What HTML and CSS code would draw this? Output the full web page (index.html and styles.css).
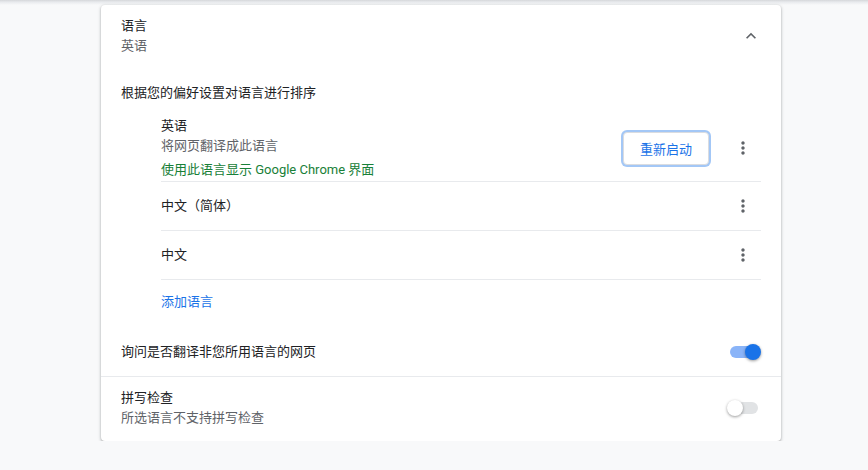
FILE: index.html
```html
<!DOCTYPE html>
<html lang="zh-CN">
  <head>
    <meta charset="UTF-8" />
    <meta name="viewport" content="width=device-width, initial-scale=1.0" />
    <title>设置 - 语言</title>
    <link rel="stylesheet" href="styles.css">
  </head>
  <body>
    <div class="toolbar-shade"></div>

    <div class="card">
      <div class="section-head">
        <div>
          <div class="title">语言</div>
          <div class="sub">英语</div>
        </div>
        <svg class="chevron" viewBox="0 0 24 24" width="20" height="20">
          <path d="M12 8l-6 6 1.41 1.41L12 10.83l4.59 4.58L18 14z" fill="#5f6368"/>
        </svg>
      </div>

      <div class="hint">根据您的偏好设置对语言进行排序</div>

      <div class="lang-list">
        <div class="lang-row first">
          <div class="lang-info">
            <div class="title">英语</div>
            <div class="sub">将网页翻译成此语言</div>
            <div class="ui-lang">使用此语言显示 Google Chrome 界面</div>
          </div>
          <button class="restart-btn">重新启动</button>
          <span class="more">
            <svg viewBox="0 0 24 24" width="20" height="20"><path d="M12 8c1.1 0 2-.9 2-2s-.9-2-2-2-2 .9-2 2 .9 2 2 2zm0 2c-1.1 0-2 .9-2 2s.9 2 2 2 2-.9 2-2-.9-2-2-2zm0 6c-1.1 0-2 .9-2 2s.9 2 2 2 2-.9 2-2-.9-2-2-2z" fill="#5f6368"/></svg>
          </span>
        </div>
        <div class="lang-row">
          <div class="lang-info"><div class="title">中文（简体）</div></div>
          <span class="more">
            <svg viewBox="0 0 24 24" width="20" height="20"><path d="M12 8c1.1 0 2-.9 2-2s-.9-2-2-2-2 .9-2 2 .9 2 2 2zm0 2c-1.1 0-2 .9-2 2s.9 2 2 2 2-.9 2-2-.9-2-2-2zm0 6c-1.1 0-2 .9-2 2s.9 2 2 2 2-.9 2-2-.9-2-2-2z" fill="#5f6368"/></svg>
          </span>
        </div>
        <div class="lang-row">
          <div class="lang-info"><div class="title">中文</div></div>
          <span class="more">
            <svg viewBox="0 0 24 24" width="20" height="20"><path d="M12 8c1.1 0 2-.9 2-2s-.9-2-2-2-2 .9-2 2 .9 2 2 2zm0 2c-1.1 0-2 .9-2 2s.9 2 2 2 2-.9 2-2-.9-2-2-2zm0 6c-1.1 0-2 .9-2 2s.9 2 2 2 2-.9 2-2-.9-2-2-2z" fill="#5f6368"/></svg>
          </span>
        </div>
        <div class="add-lang">添加语言</div>
      </div>

      <div class="setting-row">
        <div class="title">询问是否翻译非您所用语言的网页</div>
        <span class="toggle on"><span class="track"></span><span class="knob"></span></span>
      </div>

      <div class="setting-row spell">
        <div>
          <div class="title">拼写检查</div>
          <div class="sub">所选语言不支持拼写检查</div>
        </div>
        <span class="toggle"><span class="track"></span><span class="knob"></span></span>
      </div>
    </div>
  </body>
</html>
```

FILE: styles.css
```css
:root {
  --text-primary: #202124;
  --text-secondary: #5f6368;
  --blue: #1a73e8;
  --green: #188038;
  --divider: #e8eaed;
}

body {
  margin: 0;
  background-color: #f8f9fa;
  font-family: Roboto, "Noto Sans CJK SC", sans-serif;
  font-size: 13px;
  line-height: 20px;
  color: var(--text-primary);
}

.toolbar-shade {
  height: 5px;
  background: linear-gradient(#d5d7da 0, #e8eaed 2px, #f8f9fa 5px);
}

.card {
  width: 680px;
  margin-left: 101px;
  background-color: #fff;
  border-radius: 4px;
  box-shadow: 0 1px 2px rgba(60, 64, 67, 0.3), 0 1px 3px 1px rgba(60, 64, 67, 0.15);
}

.title {
  color: var(--text-primary);
}

.sub {
  color: var(--text-secondary);
}

.section-head {
  display: flex;
  justify-content: space-between;
  align-items: center;
  padding: 11px 20px 12px;
}

.hint {
  padding: 15px 20px 13px;
}

/* lista delle lingue */
.lang-list {
  margin: 0 20px 0 60px;
}

.lang-row {
  display: flex;
  align-items: center;
  height: 48px;
  border-bottom: 1px solid var(--divider);
}

.lang-row.first {
  height: auto;
  padding-bottom: 1px;
}

.lang-info {
  flex: 1;
}

.ui-lang {
  margin-top: 4px;
  color: var(--green);
}

.restart-btn {
  height: 33px;
  padding: 0 16px;
  margin-right: 16px;
  background: #fff;
  border: 1px solid #dadce0;
  border-radius: 4px;
  box-shadow: 0 0 0 2px rgba(26, 115, 232, 0.4);
  color: var(--blue);
  font-family: inherit;
  font-size: 13px;
  font-weight: 400;
}

.more {
  display: flex;
  justify-content: center;
  align-items: center;
  width: 36px;
  height: 36px;
}

.add-lang {
  padding: 12px 0 16px;
  color: var(--blue);
}

.setting-row {
  display: flex;
  justify-content: space-between;
  align-items: center;
  height: 48px;
  padding: 0 20px;
}

.setting-row.spell {
  height: auto;
  padding: 11px 20px 13px;
  border-top: 1px solid var(--divider);
}

.toggle {
  position: relative;
  display: block;
  width: 34px;
  height: 16px;
}

.toggle .track {
  position: absolute;
  left: 3px;
  right: 3px;
  top: 2px;
  height: 12px;
  border-radius: 6px;
  background-color: #e1e3e5;
}

.toggle .knob {
  position: absolute;
  top: 0;
  left: 0;
  width: 16px;
  height: 16px;
  border-radius: 50%;
  background-color: #fff;
  box-shadow: 0 1px 3px rgba(0, 0, 0, 0.4);
}

.toggle.on .track {
  background-color: #8ab4f8;
}

.toggle.on .knob {
  left: auto;
  right: 0;
  background-color: var(--blue);
}
```
